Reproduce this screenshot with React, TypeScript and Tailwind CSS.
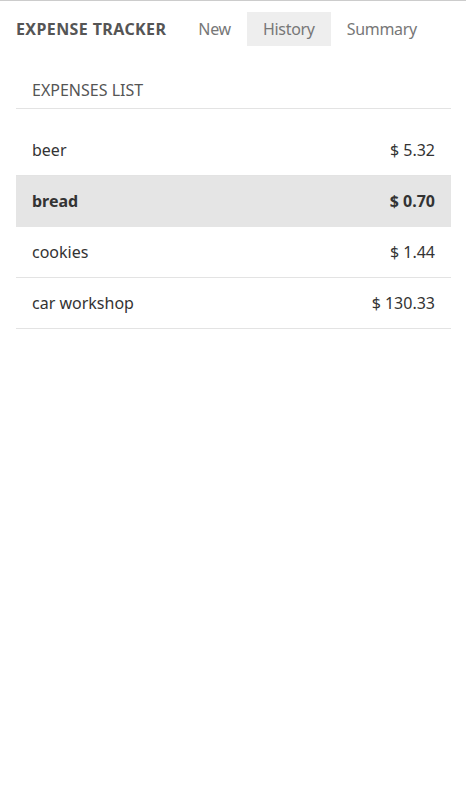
import React from "react";

const rows = [
  { name: "beer", amount: "$ 5.32", active: false },
  { name: "bread", amount: "$ 0.70", active: true },
  { name: "cookies", amount: "$ 1.44", active: false },
  { name: "car workshop", amount: "$ 130.33", active: false },
];

export default function App() {
  return (
    <div
      className="min-h-[796px] bg-white border-t border-[#cccccc]"
      style={{ fontFamily: '"Noto Sans", "Open Sans", sans-serif' }}
    >
      <div className="flex items-center pl-4 pt-[11px] h-[45px]">
        <div className="text-[16px] font-bold text-[#555555] mr-4 tracking-[0.4px]">EXPENSE TRACKER</div>
        <div className="flex items-center h-[34px] px-4 text-[16px] text-[#777777] tracking-[-0.3px]">New</div>
        <div className="flex items-center h-[34px] px-4 text-[16px] text-[#777777] bg-[#eeeeee] tracking-[-0.3px]">History</div>
        <div className="flex items-center h-[34px] px-4 text-[16px] text-[#777777] tracking-[-0.3px]">Summary</div>
      </div>
      <div className="ml-4 w-[435px]">
        <div className="mt-[33px] pl-4 pb-[7px] border-b border-[#e3e3e3] text-[16px] text-[#555555] leading-[22px]">
          EXPENSES LIST
        </div>
        <div className="mt-4">
          {rows.map((r) => (
            <div
              key={r.name}
              className={
                r.active
                  ? "flex justify-between items-center h-[51px] px-4 pb-[2px] bg-[#e5e5e5] text-[16px] text-[#333333] font-bold"
                  : "flex justify-between items-center h-[51px] px-4 pb-[1px] border-b border-[#e3e3e3] text-[16px] text-[#333333]"
              }
            >
              <span>{r.name}</span>
              <span>{r.amount}</span>
            </div>
          ))}
        </div>
      </div>
    </div>
  );
}
